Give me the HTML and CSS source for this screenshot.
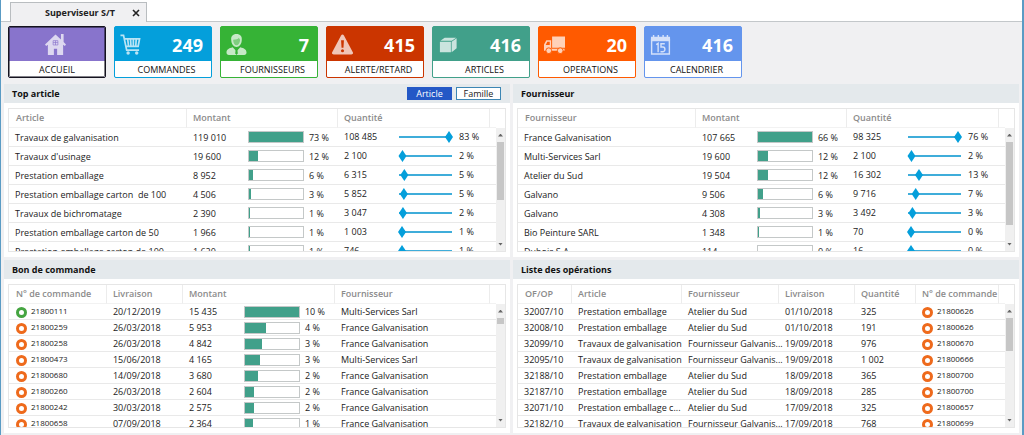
FILE: index.html
```html
<!DOCTYPE html>
<html lang="fr">
<head>
<meta charset="utf-8">
<title>Superviseur S/T</title>
<link rel="stylesheet" href="styles.css">
</head>
<body>
<div class="window">
  <header class="tabs">
    <div class="tab"><span class="tab-title">Superviseur S/T</span><button class="tab-close" aria-label="Fermer"><svg viewBox="0 0 8 8" width="8" height="8"><path d="M1 1l6 6M7 1l-6 6" stroke="#222" stroke-width="1.6"/></svg></button></div>
  </header>

  <nav class="tiles">
    <button class="tile home">
      <span class="tile-top"><svg class="icon" viewBox="0 0 22 22"><path fill="#fff" d="M11 .5L0 11l1.200 1.500L3 11.200V22h6.300v-6.500h3.400V22H19V11.200l1.800 1.300L22 11l-2.500-2.500V0h-2.800v5.800z"/><path stroke="#8874cc" d="M8.500 9h5M11 7v4.500M8.500 7v4.500h5V7z" fill="none" stroke-width=".7"/></svg></span>
      <span class="tile-label">ACCUEIL</span>
    </button>
    <button class="tile blue">
      <span class="tile-top"><svg class="icon" viewBox="0 0 22 22"><path fill="none" stroke="#fff" stroke-width="1.800" d="M.5 1.500h3.200L7 17h13M5 5h15.500l-1.500 8H6.500"/><path stroke="#fff" stroke-width="1.800" d="M8 5l1 8M11 5l.5 8M14 5v8M17 5l-.5 8"/><circle cx="8.500" cy="20" r="1.800" fill="#fff"/><circle cx="17.500" cy="20" r="1.800" fill="#fff"/></svg><span class="count">249</span></span>
      <span class="tile-label">COMMANDES</span>
    </button>
    <button class="tile green">
      <span class="tile-top"><svg class="icon" viewBox="0 0 22 22"><path fill="#fff" d="M11 0c4 0 6 2.500 5.500 6.500-.2 4-2.500 7-5.500 7s-5.300-3-5.500-7C5 2.500 7 0 11 0z"/><path fill="#36b336" d="M7.500 6c3 0 5-.5 6-2 .5 1 1 1.500 1.300 2-.2 3.500-1.800 5.800-3.800 5.800S7.600 9.500 7.500 6z" opacity=".5"/><path fill="#fff" d="M7 14l4 4 4-4c4 1 6.500 2.500 6.500 5.500 0 1.500-1 2.500-2.500 2.500H3C1.500 22 .5 21 .5 19.500.5 16.500 3 15 7 14z"/><path fill="#36b336" d="M10.200 16h1.600l.6 4.500L11 22l-1.400-1.500z"/></svg><span class="count">7</span></span>
      <span class="tile-label">FOURNISSEURS</span>
    </button>
    <button class="tile red">
      <span class="tile-top"><svg class="icon" viewBox="0 0 22 22"><path fill="#fff" d="M9.500 1.500c.7-1.200 2.300-1.200 3 0l9.300 17.500c.6 1.200 0 2.500-1.500 2.500H1.700C.2 21.500-.4 20.200.2 19z"/><path fill="#cb3500" d="M9.500 6.500h3l-.5 8h-2z"/><circle cx="11" cy="17.500" r="1.600" fill="#cb3500"/></svg><span class="count">415</span></span>
      <span class="tile-label">ALERTE/RETARD</span>
    </button>
    <button class="tile teal">
      <span class="tile-top"><svg class="icon" viewBox="0 0 22 22"><path fill="#fff" d="M2 8h11.500v11H2zM2.500 7L7 4h12l-4.500 3zM14.300 8L19.500 4.500V15l-5.200 4z"/></svg><span class="count">416</span></span>
      <span class="tile-label">ARTICLES</span>
    </button>
    <button class="tile orange">
      <span class="tile-top"><svg class="icon" viewBox="0 0 22 22"><path fill="#fff" d="M8.500 2.500H22v12H8.500zM0 16.500V11l2.500-4.500H7.500V15.500h14v2H0z"/><path fill="#ff5a00" d="M1.800 11.500L3.500 8H6v3.500z"/><g fill="#fff" stroke="#ff5a00" stroke-width="1"><circle cx="5" cy="17.500" r="3"/><circle cx="17" cy="17.500" r="3"/></g></svg><span class="count">20</span></span>
      <span class="tile-label">OPERATIONS</span>
    </button>
    <button class="tile sky">
      <span class="tile-top"><svg class="icon" viewBox="0 0 22 22"><path fill="#fff" d="M1 3h20v4.500H1zM3 1h1.500v3H3zM8 1h1.500v3H8zM13 1h1.500v3H13zM17.500 1H19v3h-1.500z"/><path fill="none" stroke="#fff" stroke-width="1.500" d="M1.700 5v16h18.600V5M6.500 11.200l2-1.400V19M15.500 10.200h-4v3.500h2.200c2.500 0 2.600 4.800 0 4.800H11"/></svg><span class="count">416</span></span>
      <span class="tile-label">CALENDRIER</span>
    </button>
  </nav>

  <main class="panels">
    <section class="panel">
      <div class="panel-head"><h2>Top article</h2><div class="switch"><button class="choice active">Article</button><button class="choice">Famille</button></div></div>
      <div class="list">
        <table class="grid tall">
          <colgroup><col><col class="w61"><col class="w56"><col class="w34"><col class="w60"><col class="w55"><col class="w37"><col class="w6"></colgroup>
          <thead><tr><th>Article</th><th colspan="3">Montant</th><th colspan="3">Quantité</th><th></th></tr></thead>
          <tbody>
            <tr><td>Travaux de galvanisation</td><td>119 010</td><td class="flat"><div class="bar"><div class="fill" style="width:100%"></div></div></td><td class="pct">73 %</td><td class="up">108 485</td><td class="flat"><input type="range" aria-label="Part quantité" value="100"></td><td class="up">83 %</td><td></td></tr>
            <tr><td>Travaux d'usinage</td><td>19 600</td><td class="flat"><div class="bar"><div class="fill" style="width:17%"></div></div></td><td class="pct">12 %</td><td class="up">2 100</td><td class="flat"><input type="range" aria-label="Part quantité" value="1"></td><td class="up">2 %</td><td></td></tr>
            <tr><td>Prestation emballage</td><td>8 952</td><td class="flat"><div class="bar"><div class="fill" style="width:8%"></div></div></td><td class="pct">6 %</td><td class="up">6 315</td><td class="flat"><input type="range" aria-label="Part quantité" value="5"></td><td class="up">5 %</td><td></td></tr>
            <tr><td>Prestation emballage carton&nbsp; de 100</td><td>4 506</td><td class="flat"><div class="bar"><div class="fill" style="width:4%"></div></div></td><td class="pct">3 %</td><td class="up">5 852</td><td class="flat"><input type="range" aria-label="Part quantité" value="4"></td><td class="up">5 %</td><td></td></tr>
            <tr><td>Travaux de bichromatage</td><td>2 390</td><td class="flat"><div class="bar"><div class="fill" style="width:2%"></div></div></td><td class="pct">1 %</td><td class="up">3 047</td><td class="flat"><input type="range" aria-label="Part quantité" value="2"></td><td class="up">2 %</td><td></td></tr>
            <tr><td>Prestation emballage carton de 50</td><td>1 966</td><td class="flat"><div class="bar"><div class="fill" style="width:2%"></div></div></td><td class="pct">1 %</td><td class="up">1 003</td><td class="flat"><input type="range" aria-label="Part quantité" value="0"></td><td class="up">1 %</td><td></td></tr>
            <tr><td>Prestation emballage carton de 100</td><td>1 620</td><td class="flat"><div class="bar"><div class="fill" style="width:2%"></div></div></td><td class="pct">1 %</td><td class="up">746</td><td class="flat"><input type="range" aria-label="Part quantité" value="0"></td><td class="up">1 %</td><td></td></tr>
          </tbody>
        </table>
        <div class="scroll"><span class="arrow-up"></span><span class="thumb" style="height:61%"></span><span class="arrow-down"></span></div>
      </div>
    </section>

    <section class="panel">
      <div class="panel-head"><h2>Fournisseur</h2></div>
      <div class="list">
        <table class="grid tall">
          <colgroup><col><col class="w61"><col class="w56"><col class="w34"><col class="w60"><col class="w55"><col class="w37"><col class="w6"></colgroup>
          <thead><tr><th>Fournisseur</th><th colspan="3">Montant</th><th colspan="3">Quantité</th><th></th></tr></thead>
          <tbody>
            <tr><td>France Galvanisation</td><td>107 665</td><td class="flat"><div class="bar"><div class="fill" style="width:100%"></div></div></td><td class="pct">66 %</td><td class="up">98 325</td><td class="flat"><input type="range" aria-label="Part quantité" value="100"></td><td class="up">76 %</td><td></td></tr>
            <tr><td>Multi-Services Sarl</td><td>19 600</td><td class="flat"><div class="bar"><div class="fill" style="width:18%"></div></div></td><td class="pct">12 %</td><td class="up">2 100</td><td class="flat"><input type="range" aria-label="Part quantité" value="1"></td><td class="up">2 %</td><td></td></tr>
            <tr><td>Atelier du Sud</td><td>19 504</td><td class="flat"><div class="bar"><div class="fill" style="width:18%"></div></div></td><td class="pct">12 %</td><td class="up">16 302</td><td class="flat"><input type="range" aria-label="Part quantité" value="17"></td><td class="up">13 %</td><td></td></tr>
            <tr><td>Galvano</td><td>9 506</td><td class="flat"><div class="bar"><div class="fill" style="width:9%"></div></div></td><td class="pct">6 %</td><td class="up">9 716</td><td class="flat"><input type="range" aria-label="Part quantité" value="10"></td><td class="up">7 %</td><td></td></tr>
            <tr><td>Galvano</td><td>4 308</td><td class="flat"><div class="bar"><div class="fill" style="width:4%"></div></div></td><td class="pct">3 %</td><td class="up">3 492</td><td class="flat"><input type="range" aria-label="Part quantité" value="3"></td><td class="up">3 %</td><td></td></tr>
            <tr><td>Bio Peinture SARL</td><td>1 348</td><td class="flat"><div class="bar"><div class="fill" style="width:2%"></div></div></td><td class="pct">1 %</td><td class="up">70</td><td class="flat"><input type="range" aria-label="Part quantité" value="0"></td><td class="up">0 %</td><td></td></tr>
            <tr><td>Dubois S.A.</td><td>114</td><td class="flat"><div class="bar"><div class="fill" style="width:0%"></div></div></td><td class="pct">0 %</td><td class="up">16</td><td class="flat"><input type="range" aria-label="Part quantité" value="0"></td><td class="up">0 %</td><td></td></tr>
          </tbody>
        </table>
        <div class="scroll"><span class="arrow-up"></span><span class="thumb" style="height:87%"></span><span class="arrow-down"></span></div>
      </div>
    </section>

    <section class="panel">
      <div class="panel-head"><h2>Bon de commande</h2></div>
      <div class="list">
        <table class="grid">
          <colgroup><col><col class="w76"><col class="w61"><col class="w56"><col class="w35"><col class="w155"><col class="w6"></colgroup>
          <thead><tr><th>N° de commande</th><th>Livraison</th><th colspan="3">Montant</th><th>Fournisseur</th><th></th></tr></thead>
          <tbody>
            <tr><td class="order"><i class="ring ok"></i>21800111</td><td>20/12/2019</td><td>15 435</td><td class="flat"><div class="bar"><div class="fill" style="width:100%"></div></div></td><td class="pct">10 %</td><td>Multi-Services Sarl</td><td></td></tr>
            <tr><td class="order"><i class="ring"></i>21800259</td><td>26/03/2018</td><td>5 953</td><td class="flat"><div class="bar"><div class="fill" style="width:39%"></div></div></td><td class="pct">4 %</td><td>France Galvanisation</td><td></td></tr>
            <tr><td class="order"><i class="ring"></i>21800258</td><td>26/03/2018</td><td>4 842</td><td class="flat"><div class="bar"><div class="fill" style="width:31%"></div></div></td><td class="pct">3 %</td><td>France Galvanisation</td><td></td></tr>
            <tr><td class="order"><i class="ring"></i>21800473</td><td>15/06/2018</td><td>4 165</td><td class="flat"><div class="bar"><div class="fill" style="width:27%"></div></div></td><td class="pct">3 %</td><td>Multi-Services Sarl</td><td></td></tr>
            <tr><td class="order"><i class="ring"></i>21800680</td><td>14/09/2018</td><td>3 680</td><td class="flat"><div class="bar"><div class="fill" style="width:24%"></div></div></td><td class="pct">2 %</td><td>France Galvanisation</td><td></td></tr>
            <tr><td class="order"><i class="ring"></i>21800260</td><td>26/03/2018</td><td>2 604</td><td class="flat"><div class="bar"><div class="fill" style="width:17%"></div></div></td><td class="pct">2 %</td><td>France Galvanisation</td><td></td></tr>
            <tr><td class="order"><i class="ring"></i>21800242</td><td>30/03/2018</td><td>2 575</td><td class="flat"><div class="bar"><div class="fill" style="width:17%"></div></div></td><td class="pct">2 %</td><td>France Galvanisation</td><td></td></tr>
            <tr><td class="order"><i class="ring"></i>21800658</td><td>07/09/2018</td><td>2 364</td><td class="flat"><div class="bar"><div class="fill" style="width:15%"></div></div></td><td class="pct">1 %</td><td>France Galvanisation</td><td></td></tr>
          </tbody>
        </table>
        <div class="scroll"><span class="arrow-up"></span><span class="thumb" style="height:6%"></span><span class="arrow-down"></span></div>
      </div>
    </section>

    <section class="panel">
      <div class="panel-head"><h2>Liste des opérations</h2></div>
      <div class="list">
        <table class="grid">
          <colgroup><col class="w54"><col class="w110"><col><col class="w76"><col class="w61"><col class="w83"><col class="w6"></colgroup>
          <thead><tr><th>OF/OP</th><th>Article</th><th>Fournisseur</th><th>Livraison</th><th>Quantité</th><th>N° de commande</th><th></th></tr></thead>
          <tbody>
            <tr><td>32007/10</td><td>Prestation emballage</td><td>Atelier du Sud</td><td>01/10/2018</td><td>325</td><td class="order"><i class="ring"></i>21800626</td><td></td></tr>
            <tr><td>32008/10</td><td>Prestation emballage</td><td>Atelier du Sud</td><td>01/10/2018</td><td>191</td><td class="order"><i class="ring"></i>21800626</td><td></td></tr>
            <tr><td>32099/10</td><td>Travaux de galvanisation</td><td>Fournisseur Galvanis...</td><td>19/09/2018</td><td>976</td><td class="order"><i class="ring"></i>21800670</td><td></td></tr>
            <tr><td>32095/10</td><td>Travaux de galvanisation</td><td>Fournisseur Galvanis...</td><td>19/09/2018</td><td>1 002</td><td class="order"><i class="ring"></i>21800666</td><td></td></tr>
            <tr><td>32188/10</td><td>Prestation emballage</td><td>Atelier du Sud</td><td>18/09/2018</td><td>365</td><td class="order"><i class="ring"></i>21800700</td><td></td></tr>
            <tr><td>32187/10</td><td>Prestation emballage</td><td>Atelier du Sud</td><td>18/09/2018</td><td>285</td><td class="order"><i class="ring"></i>21800700</td><td></td></tr>
            <tr><td>32071/10</td><td>Prestation emballage c...</td><td>Atelier du Sud</td><td>17/09/2018</td><td>325</td><td class="order"><i class="ring"></i>21800657</td><td></td></tr>
            <tr><td>32182/10</td><td>Travaux de galvanisation</td><td>Fournisseur Galvanis...</td><td>17/09/2018</td><td>768</td><td class="order"><i class="ring"></i>21800699</td><td></td></tr>
          </tbody>
        </table>
        <div class="scroll"><span class="arrow-up"></span><span class="thumb" style="height:35%"></span><span class="arrow-down"></span></div>
      </div>
    </section>
  </main>
</div>
</body>
</html>
```
FILE: styles.css
```css
* { box-sizing: border-box; }

body {
  margin: 0;
  font-family: "Open Sans", "Noto Sans", sans-serif;
  font-size: 9px;
  line-height: 12px;
  color: #222;
}

button {
  font: inherit;
  color: inherit;
  padding: 0;
  margin: 0;
  border: 0;
  background: none;
}

.window {
  display: flex;
  flex-direction: column;
  height: 100vh;
  background: #f0f0f2;
  border-left: 1px solid #5a9bc4;
  border-right: 2px solid #5a9bc4;
}

/* Tab strip */
.tabs {
  display: flex;
  flex: none;
  height: 22px;
  padding: 2px 0 0 9px;
  background: linear-gradient(#c3c7ca, #c3c7ca) bottom / 100% 1px no-repeat #fff;
}

.tab {
  display: flex;
  align-items: center;
  justify-content: space-between;
  width: 137px;
  padding: 0 6px 0 34px;
  background: #f0f0f2;
  border: 1px solid #b9bdc0;
  border-bottom: 0;
  font-weight: 700;
}

.tab-close { display: flex; }

/* Counter tiles */
.tiles {
  display: flex;
  flex: none;
  gap: 8px;
  padding: 4px 7px 6px;
}

.tile {
  --tone: #8874cc;
  display: flex;
  flex-direction: column;
  width: 98px;
  height: 52px;
  overflow: hidden;
  border: 1px solid var(--tone);
  border-radius: 2px;
  background: var(--tone);
}

.home {
  border-color: #15131f;
  outline: 1px solid #15131f88;
  outline-offset: -2px;
}
.blue { --tone: #049fdb; }
.green { --tone: #36b336; }
.red { --tone: #cb3500; }
.teal { --tone: #41a08a; }
.orange { --tone: #ff5a00; }
.sky { --tone: #6495ed; }

.tile-top {
  display: flex;
  flex: 1;
  align-items: center;
  justify-content: space-between;
  width: 100%;
  padding: 0 8px 0 5px;
}

.home .tile-top { justify-content: center; }

.icon {
  flex: none;
  width: 21px;
  height: 21px;
  opacity: .72;
}

.count {
  padding-top: 2px;
  color: #fff;
  font-size: 18px;
  font-weight: 700;
  line-height: 20px;
}

.tile-label {
  width: 100%;
  height: 16px;
  padding-left: 7px;
  background: #fff;
  color: #111;
  line-height: 17px;
  text-align: center;
}

.home .tile-label { padding-left: 0; }

/* Panels */
.panels {
  display: grid;
  flex: 1;
  grid-template: 1fr 1fr / 1fr 1fr;
  gap: 3px;
  min-height: 0;
  padding: 0 3px 2px;
}

.panel {
  display: flex;
  flex-direction: column;
  min-width: 0;
  min-height: 0;
  background: #fff;
}

.panel-head {
  display: flex;
  flex: none;
  align-items: center;
  justify-content: space-between;
  height: 19px;
  padding: 0 9px 0 8px;
  background: #e4e9ec;
}

h2 {
  margin: 0;
  font-size: 9px;
  font-weight: 700;
  color: #111;
}

.switch { display: flex; gap: 4px; }

.choice {
  width: 45px;
  height: 13px;
  border: 1px solid #3c86b4;
  background: #fff;
  line-height: 11px;
}

.choice.active {
  border-color: #2458c6;
  background: #2458c6;
  color: #fff;
}

.list {
  display: flex;
  flex: 1;
  min-height: 0;
  margin: 5px 4px;
  overflow: hidden;
  border: 1px solid #e6e6e6;
}

/* Data tables */
.grid {
  flex: 1;
  align-self: flex-start;
  width: 0;
  table-layout: fixed;
  border-collapse: separate;
  border-spacing: 0;
}

th {
  height: 19px;
  padding: 0 0 0 6px;
  border-right: 1px solid #ececec;
  border-bottom: 1px solid #f2f2f2;
  color: #8b8b8b;
  font-weight: 600;
  text-align: left;
  white-space: nowrap;
}

th:last-child { border-right: 0; }

td {
  height: 16px;
  padding: 0 0 0 6px;
  border-bottom: 1px solid #e9e9e9;
  white-space: nowrap;
}

.tall td { height: 19px; padding-top: 2px; }
.grid th:first-child { padding-left: 7px; }
.grid td:first-child { padding-left: 6px; }
.grid td.pct { padding-left: 5px; }
.grid td.flat { padding: 0; }
.grid td.up { padding: 0 0 0 6px; }

.w6 { width: 6px; }
.w34 { width: 34px; }
.w35 { width: 35px; }
.w37 { width: 37px; }
.w54 { width: 54px; }
.w55 { width: 55px; }
.w56 { width: 56px; }
.w60 { width: 60px; }
.w61 { width: 61px; }
.w76 { width: 76px; }
.w83 { width: 83px; }
.w110 { width: 110px; }
.w155 { width: 155px; }

.bar {
  height: 12px;
  border: 1px solid #c4c8c8;
  background: #fff;
}

.fill {
  height: 100%;
  background: #41a08a;
}

input[type="range"] {
  display: block;
  width: 100%;
  height: 12px;
  margin: 0;
  appearance: none;
  background: linear-gradient(#3fadda, #3fadda) center / calc(100% - 2px) 2px no-repeat;
}

input[type="range"]::-webkit-slider-thumb {
  appearance: none;
  width: 8px;
  height: 12px;
  background: #049fdb;
  clip-path: polygon(50% 0, 100% 50%, 50% 100%, 0 50%);
}

.grid td.order { font-size: 8px; }
.grid td.order:first-child { padding-left: 7px; }

.ring {
  display: inline-block;
  width: 11px;
  height: 11px;
  margin-right: 4px;
  border: 3px solid #ee6a1c;
  border-radius: 50%;
  vertical-align: middle;
}

.ring.ok { border-color: #45a541; }

/* Scroll bar */
.scroll {
  display: grid;
  flex: none;
  grid-template-rows: 14px 1fr 14px;
  justify-items: center;
  width: 9px;
  margin-top: 19px;
  background: #f0f0f0;
}

.thumb {
  width: 7px;
  background: #c6c6c6;
}

.arrow-up,
.arrow-down {
  align-self: center;
  width: 5px;
  height: 3px;
  background: #666;
  clip-path: polygon(50% 0, 100% 100%, 0 100%);
}

.arrow-down { clip-path: polygon(0 0, 100% 0, 50% 100%); }
```
